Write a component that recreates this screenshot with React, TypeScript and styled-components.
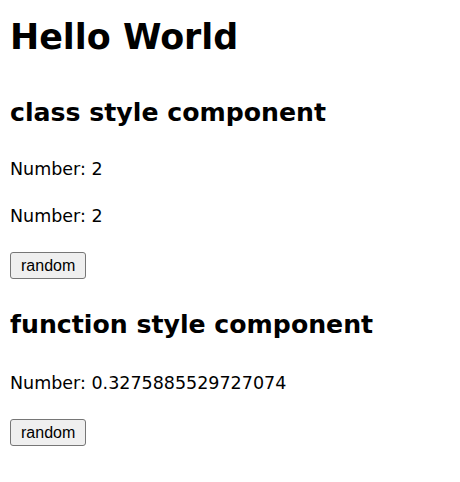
import React, { useState } from "react";
import styled, { createGlobalStyle } from "styled-components";

const Global = createGlobalStyle`
  html, body { margin: 0; padding: 0; background: #fff; }
  body { font-family: "DejaVu Sans", "Noto Sans CJK KR", sans-serif; color: #000; }
`;

const Page = styled.div`
  display: flex;
  flex-direction: column;
  align-items: flex-start;
  padding: 0 10px;
`;

const Title = styled.h1`
  margin: 14.2px 0 0;
  font-size: 34.9px;
  line-height: 1.33;
  font-weight: 700;
`;

const Heading = styled.h2<{ $gap: number }>`
  margin: ${(p) => p.$gap}px 0 0;
  font-size: 25.2px;
  line-height: 1.33;
  font-weight: 700;
`;

const Line = styled.p<{ $gap: number }>`
  margin: ${(p) => p.$gap}px 0 0;
  font-size: 17.5px;
  line-height: 1.33;
`;

const Button = styled.button<{ $gap: number }>`
  margin: ${(p) => p.$gap}px 0 0 0;
  height: 27px;
  padding: 0 10px;
  font-family: "Liberation Sans", Arial, sans-serif;
  font-size: 16px;
  color: #000;
  background: #efefef;
  border: 1px solid #767676;
  border-radius: 3px;
`;

export default function App() {
  const [classNum, setClassNum] = useState<number>(2);
  const [fnNum, setFnNum] = useState<number>(0.3275885529727074);
  return (
    <>
      <Global />
      <Page>
        <Title>Hello World</Title>
        <Heading $gap={35.3}>class style component</Heading>
        <Line $gap={28.3}>Number: {classNum}</Line>
        <Line $gap={23.7}>Number: {classNum}</Line>
        <Button $gap={24.4} onClick={() => setClassNum(Math.floor(Math.random() * 10))}>
          random
        </Button>
        <Heading $gap={28.6}>function style component</Heading>
        <Line $gap={30.3}>Number: {fnNum}</Line>
        <Button $gap={24.4} onClick={() => setFnNum(Math.random())}>
          random
        </Button>
      </Page>
    </>
  );
}
